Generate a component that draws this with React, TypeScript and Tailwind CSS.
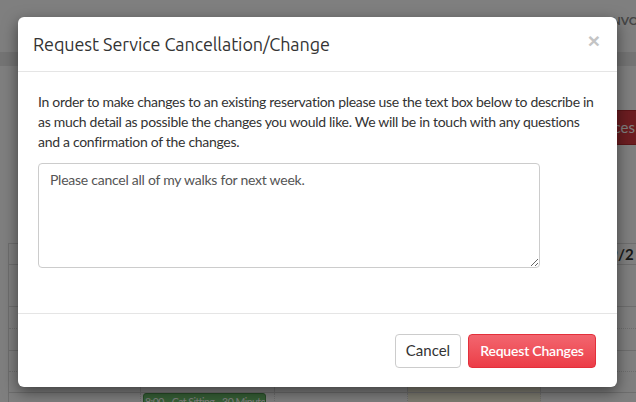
import React from "react";

const navItems: [string, string][] = [
  ["ACTIVITY FEED", "w-[115px]"],
  ["PETS", "w-[60px]"],
  ["SCHEDULE", "w-[94px]"],
  ["MY INFO", "w-[79px]"],
  ["INVOICES", "w-[90px]"],
];
const cols: [string, string][] = [
  ["Tue 8/29", "w-[132px]"],
  ["Wed 8/30", "w-[134px]"],
  ["Thu 8/31", "w-[133px]"],
  ["Fri 9/1", "w-[133px]"],
  ["Sat 9/2", "w-[133px]"],
  ["Sun 9/3", "w-[133px]"],
];
const rowDefs: [string, string][] = [
  ["h-[22px]", "border-dotted"],
  ["h-[22px]", "border-solid"],
  ["h-[21px]", "border-dotted"],
  ["h-[21px]", "border-solid"],
  ["h-[22px]", "border-dotted"],
];

function BackgroundPage() {
  return (
    <div className="flex h-[402px] w-[636px] flex-col bg-white font-['Lato',sans-serif]">
      <nav className="flex h-[52px] shrink-0 items-start pl-[260px] pt-[12px] text-[12px] font-bold uppercase text-[#8c8c8c] whitespace-nowrap">
        {navItems.map(([n, w]) => (
          <span key={n} className={`${w} shrink-0`}>
            {n}
          </span>
        ))}
      </nav>
      <div className="h-[14px] shrink-0 bg-[#e8e8e8]" />
      <div className="h-[44px] shrink-0" />
      <div className="flex h-[35px] shrink-0 justify-end">
        <div className="mr-[-12px] flex items-center rounded-[4px] border border-[#b8282e] bg-[#d93a42] px-[12px] text-[15px] text-white">
          Services
        </div>
      </div>
      <div className="h-[98px] shrink-0" />
      <div className="ml-[8px] flex w-max flex-col border-l border-[#dcdcdc]">
        <div className="flex">
          {cols.map(([c, w]) => (
            <div
              key={c}
              className={`${w} flex h-[22px] shrink-0 items-center justify-center border-b border-r border-t border-[#dcdcdc] pl-[4px] text-[15px] font-bold text-[#333]`}
            >
              {c}
            </div>
          ))}
        </div>
        <div className="flex">
          {cols.map(([c, w], i) => (
            <div
              key={c}
              className={`${w} h-[42px] shrink-0 border-b border-r border-[#dcdcdc] ${i === 3 ? "bg-[#fcf8e3]" : ""}`}
            />
          ))}
        </div>
        {rowDefs.map(([h, style], r) => (
          <div key={r} className="flex">
            {cols.map(([c, w], i) => (
              <div
                key={c}
                className={`${w} ${h} shrink-0 border-b border-r border-[#dcdcdc] ${style} ${i === 3 ? "bg-[#fcf8e3]" : ""}`}
              >
                {r === 4 && i === 1 ? (
                  <div className="ml-[2px] w-[123px] overflow-hidden whitespace-nowrap rounded-[3px] border border-[#4f9a4f] bg-[#6cbf6c] px-[1px] text-[10.5px] leading-[16px] tracking-[-0.5px] text-white">
                    8:00 - Cat Sitting - 30 Minutes
                  </div>
                ) : null}
              </div>
            ))}
          </div>
        ))}
      </div>
    </div>
  );
}

export default function App() {
  return (
    <div className="relative h-[402px] w-[636px] overflow-hidden">
      <BackgroundPage />
      <div className="absolute inset-0 bg-black/50" />
      <div className="absolute left-[18px] top-[17px] w-[599px] rounded-[6px] bg-white shadow-[0_5px_15px_rgba(0,0,0,0.5)]">
        <div className="flex h-[55px] items-center justify-between border-b border-[#e5e5e5] px-[15px]">
          <h4 className="font-['Ubuntu','Lato',sans-serif] text-[18px] font-normal tracking-[-0.1px] text-[#333]">
            Request Service Cancellation/Change
          </h4>
          <span className="mr-[2px] mt-[-7px] font-['Liberation_Sans',sans-serif] text-[21px] font-bold leading-none text-[#c4c4c4]">
            ×
          </span>
        </div>
        <div className="px-[20px] pb-[45px] pt-[20px] font-['Source_Sans_Pro','Lato',sans-serif]">
          <p className="text-[14px] leading-[20px] tracking-[-0.3px] text-[#333]">
            In order to make changes to an existing reservation please use the text box below to describe in as much
            detail as possible the changes you would like. We will be in touch with any questions and a confirmation of
            the changes.
          </p>
          <textarea
            className="mt-[11px] block h-[105px] w-[502px] rounded-[4px] border border-[#cccccc] px-[11px] py-[6px] text-[14px] leading-[20px] tracking-[-0.25px] text-[#555] outline-none"
            defaultValue="Please cancel all of my walks for next week."
          />
        </div>
        <div className="flex h-[74px] items-center justify-end gap-[7px] border-t border-[#e5e5e5] px-[21px] font-['Source_Sans_Pro','Lato',sans-serif]">
          <button className="h-[34px] w-[66px] rounded-[4px] border border-[#cccccc] bg-white text-[15px] text-[#333]">
            Cancel
          </button>
          <button className="h-[34px] w-[128px] rounded-[4px] border border-[#e3303b] bg-gradient-to-b from-[#f2656f] to-[#ec3c47] text-[14px] font-semibold tracking-[-0.2px] text-white">
            Request Changes
          </button>
        </div>
      </div>
    </div>
  );
}
